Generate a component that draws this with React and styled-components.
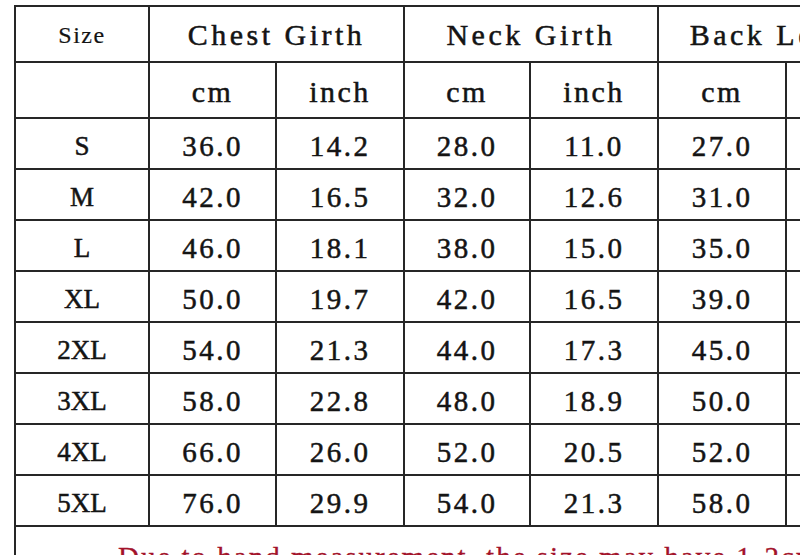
import React from "react";
import styled, { createGlobalStyle } from "styled-components";

const GlobalStyle = createGlobalStyle`
  html, body {
    margin: 0;
    padding: 0;
    background: #ffffff;
    overflow: hidden;
  }
`;

const columns = [134, 127, 128, 126, 128, 128, 128];

const groups = [
  { label: "Chest Girth", span: 2 },
  { label: "Neck Girth", span: 2 },
  { label: "Back Length", span: 2 },
];

const units = ["cm", "inch", "cm", "inch", "cm", "inch"];

const rows = [
  ["S", "36.0", "14.2", "28.0", "11.0", "27.0", "10.6"],
  ["M", "42.0", "16.5", "32.0", "12.6", "31.0", "12.2"],
  ["L", "46.0", "18.1", "38.0", "15.0", "35.0", "13.8"],
  ["XL", "50.0", "19.7", "42.0", "16.5", "39.0", "15.4"],
  ["2XL", "54.0", "21.3", "44.0", "17.3", "45.0", "17.7"],
  ["3XL", "58.0", "22.8", "48.0", "18.9", "50.0", "19.7"],
  ["4XL", "66.0", "26.0", "52.0", "20.5", "52.0", "20.5"],
  ["5XL", "76.0", "29.9", "54.0", "21.3", "58.0", "22.8"],
];

export default function App() {
  return (
    <>
      <GlobalStyle />
      <Page>
        <Chart>
          <colgroup>
            {columns.map((w, i) => (
              <col key={i} style={{ width: w }} />
            ))}
          </colgroup>
          <thead>
            <HeadRow>
              <SizeCell>Size</SizeCell>
              {groups.map((g) => (
                <GroupCell key={g.label} colSpan={g.span}>
                  {g.label}
                </GroupCell>
              ))}
            </HeadRow>
            <HeadRow>
              <UnitCell />
              {units.map((u, i) => (
                <UnitCell key={i}>{u}</UnitCell>
              ))}
            </HeadRow>
          </thead>
          <tbody>
            {rows.map((r) => (
              <DataRow key={r[0]}>
                {r.map((v, i) => (
                  <DataCell key={i} $label={i === 0}>
                    {v}
                  </DataCell>
                ))}
              </DataRow>
            ))}
            <NoteRow>
              <NoteCell colSpan={7}>
                Due to hand measurement, the size may have 1-2cm error.
              </NoteCell>
            </NoteRow>
          </tbody>
        </Chart>
      </Page>
    </>
  );
}

const Page = styled.div`
  padding: 5px 0 0 14px;
  width: 1000px;
`;

const Chart = styled.table`
  border-collapse: collapse;
  table-layout: fixed;
  width: ${columns.reduce((a, b) => a + b, 0)}px;
  font-family: "Liberation Serif", "Times New Roman", serif;
  color: #141414;
  -webkit-text-stroke: 0.5px #141414;
`;

const HeadRow = styled.tr`
  height: 56px;
`;

const DataRow = styled.tr`
  height: 51px;
`;

const Cell = styled.td`
  border: 2px solid #262626;
  padding: 6px 0 0 0;
  text-align: center;
  vertical-align: middle;
  white-space: nowrap;
  overflow: hidden;
  font-weight: 400;
`;

const SizeCell = styled(Cell).attrs({ as: "th" })`
  font-size: 24px;
  letter-spacing: 1.5px;
  padding-top: 2px;
  -webkit-text-stroke: 0.2px #141414;
`;

const GroupCell = styled(Cell).attrs({ as: "th" })`
  font-size: 30px;
  letter-spacing: 3.5px;
  padding-top: 2px;
`;

const UnitCell = styled(Cell).attrs({ as: "th" })`
  font-size: 30px;
  letter-spacing: 2.5px;
  padding-top: 4px;
`;

const DataCell = styled(Cell)`
  font-size: ${(p) => (p.$label ? "27px" : "29px")};
  letter-spacing: ${(p) => (p.$label ? "0" : "2.5px")};
`;

const NoteRow = styled.tr`
  height: 60px;
`;

const NoteCell = styled(Cell)`
  color: #a3122a;
  -webkit-text-stroke: 0.3px #a3122a;
  font-size: 29px;
  letter-spacing: 2px;
  text-align: left;
  padding: 14px 0 0 102px;
  vertical-align: top;
`;
